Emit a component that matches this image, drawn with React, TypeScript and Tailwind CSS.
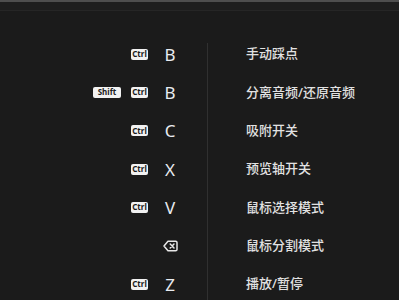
const shortcuts = [
  { mods: ['Ctrl'], key: 'B', label: '手动踩点' },
  { mods: ['Shift', 'Ctrl'], key: 'B', label: '分离音频/还原音频' },
  { mods: ['Ctrl'], key: 'C', label: '吸附开关' },
  { mods: ['Ctrl'], key: 'X', label: '预览轴开关' },
  { mods: ['Ctrl'], key: 'V', label: '鼠标选择模式' },
  { mods: [], key: 'backspace', label: '鼠标分割模式' },
  { mods: ['Ctrl'], key: 'Z', label: '播放/暂停' },
]

function Badge({ text }: { text: string }) {
  return (
    <span
      className={
        'flex h-[11px] items-center justify-center rounded-[2px] bg-[#f2f2f2] text-[8px] font-bold leading-none text-[#1b1b1b] ' +
        (text === 'Shift' ? 'w-[28px]' : 'w-[17px]')
      }
    >
      {text}
    </span>
  )
}

function BackspaceIcon() {
  return (
    <svg width="15" height="12" viewBox="0 0 15 12" fill="none" stroke="#e8e8e8" strokeWidth="1.5" strokeLinejoin="round" strokeLinecap="round">
      <path d="M5 1.2h7.6a1.4 1.4 0 0 1 1.4 1.4v6.8a1.4 1.4 0 0 1-1.4 1.4H5L1 6z" />
      <path d="M7.2 4l3.8 4M11 4L7.2 8" />
    </svg>
  )
}

export default function App() {
  return (
    <div className="h-[300px] w-[399px] overflow-hidden bg-[#1b1b1b] font-['Noto_Sans','Noto_Sans_CJK_SC',sans-serif]">
      <div className="h-[2px] bg-[#4e4e4e]" />
      <div className="h-[8px] bg-[#1e1e1e]" />
      <div className="h-px bg-[#262626]" />
      <div className="flex pt-[24px]">
        <div className="w-[207px]">
          {shortcuts.map((s, i) => (
            <div key={i} className="flex h-[38.33px] items-center justify-end pr-[27px]">
              <div className="flex items-center gap-[10px]">
                {s.mods.map((m) => (
                  <Badge key={m} text={m} />
                ))}
              </div>
              <div className="ml-[12px] flex w-[20px] justify-center text-[17px] leading-none text-[#e8ebf0]">
                {s.key === 'backspace' ? <BackspaceIcon /> : s.key}
              </div>
            </div>
          ))}
        </div>
        <div className="mt-[8px] w-px self-stretch bg-[#303030]" />
        <div className="pl-[38px]">
          {shortcuts.map((s, i) => (
            <div key={i} className="flex h-[38.33px] items-center text-[13px] font-medium text-[#e2e2e2]">
              {s.label}
            </div>
          ))}
        </div>
      </div>
    </div>
  )
}
